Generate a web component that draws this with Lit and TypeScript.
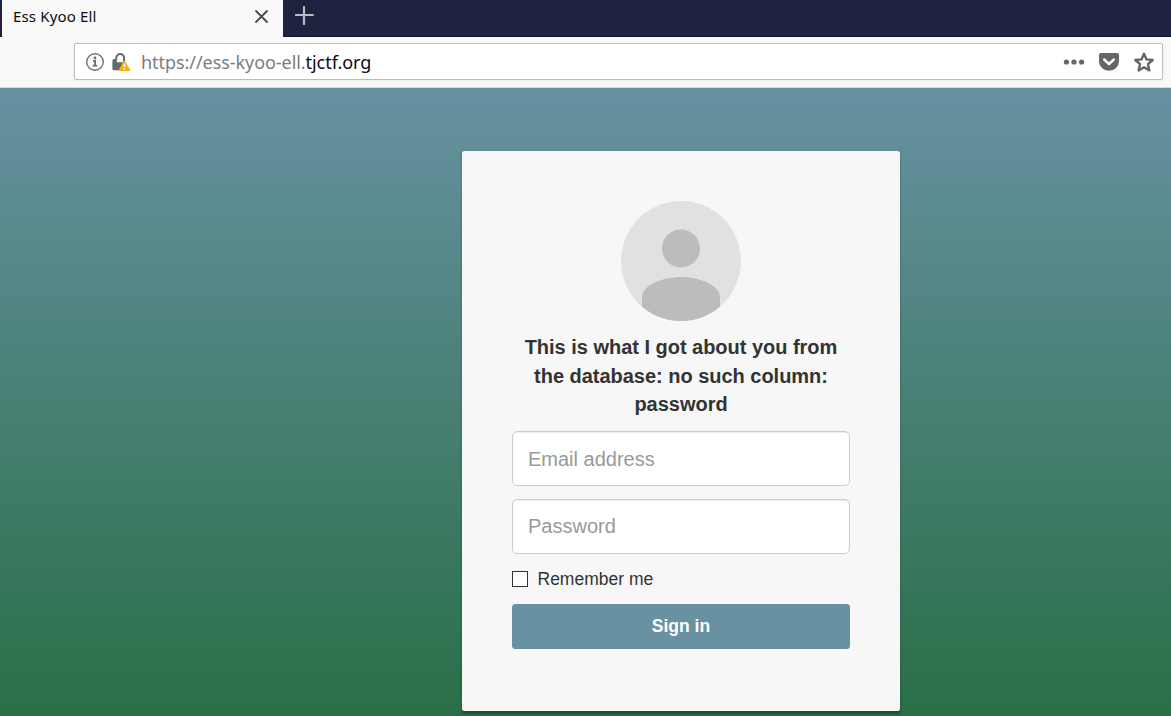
import { LitElement, html, css } from "lit";
import { customElement } from "lit/decorators.js";

@customElement("browser-chrome")
class BrowserChrome extends LitElement {
  static styles = css`
    :host { display: block; font-family: "Noto Sans", sans-serif; }
    .tabs { display: flex; height: 37px; background: #20233f; box-shadow: inset 0 -1px #141630; padding-left: 2px; box-sizing: border-box; }
    .tab { display: flex; align-items: flex-start; justify-content: space-between; width: 281px; box-sizing: border-box; padding: 5px 14px 0 11px; background: #f9f9fa; color: #0c0c0d; font-size: 15px; line-height: 22px; }
    .title { white-space: nowrap; letter-spacing: .15px; }
    .close { margin-top: 4px; }
    .plus { margin: 6px 0 0 11.5px; }
    svg { display: block; flex: none; }
    .toolbar { display: flex; height: 51px; box-sizing: border-box; background: #f9f9fa; border-bottom: 1px solid #dcdcdd; padding: 6px 8px 7px 74px; }
    .field { display: flex; align-items: center; flex: 1; box-sizing: border-box; height: 37px; border: 1px solid #bcbcbd; border-radius: 2px; background: #fff; box-shadow: 0 1px 4px rgba(0,0,0,.06); padding: 0 8px 0 10px; }
    .lock { margin-left: 7px; }
    .url { flex: 1; margin-left: 10px; font-size: 18px; letter-spacing: -.06px; line-height: 26px; padding-top: 1px; color: #7c7c7c; white-space: nowrap; }
    .host { color: #0c0c0d; }
    .pocket { margin: 0 15px 0 14px; }
  `;
  render() {
    return html`
      <div class="tabs">
        <div class="tab">
          <span class="title">Ess Kyoo Ell</span>
          <svg class="close" width="15" height="15" viewBox="0 0 15 15"><path d="M2 2L13 13M13 2L2 13" stroke="#4a4a4f" stroke-width="1.8" stroke-linecap="round"/></svg>
        </div>
        <svg class="plus" width="19" height="19" viewBox="0 0 19 19"><path d="M9 1v17M.9 9h17" stroke="#b9bac5" stroke-width="2.2" stroke-linecap="round"/></svg>
      </div>
      <div class="toolbar">
        <div class="field">
          <svg width="20" height="20" viewBox="0 0 20 20"><circle cx="10" cy="10" r="8.3" fill="none" stroke="#737373" stroke-width="1.4"/><circle cx="10" cy="6" r="1.4" fill="#666"/><path d="M8 8.8h2.1v5M7.8 13.7h4.4" fill="none" stroke="#666" stroke-width="1.7"/></svg>
          <svg class="lock" width="19" height="20" viewBox="0 0 19 20"><path d="M4.300 7.500V6a3.900 3.900 0 0 1 7.800 0v4" fill="none" stroke="#696969" stroke-width="2"/><path d="M2 7h2.800v3.200h6.400v8H1.700Q.4 18.200.4 16.900V8.700Q.4 7 2 7z" fill="#696969"/><path d="M12.400 9L18 18.400H6.800z" fill="#ffb000" stroke="#ffb000" stroke-width="1" stroke-linejoin="round"/><path d="M12.400 11.700v3.300M12.400 16v1.500" stroke="#fff" stroke-width="1.500"/></svg>
          <div class="url">https://ess-kyoo-ell.<span class="host">tjctf.org</span></div>
          <svg width="22" height="20" viewBox="0 0 22 20"><g fill="#666"><circle cx="3.4" cy="10" r="2.6"/><circle cx="11" cy="10" r="2.6"/><circle cx="18.6" cy="10" r="2.6"/></g></svg>
          <svg class="pocket" width="20" height="20" viewBox="0 0 20 20"><path d="M2 1h16q2 0 2 2v6.2a10 9.6 0 0 1-20 0V3q0-2 2-2z" fill="#666"/><path d="M5.2 7.5L10 12l4.8-4.5" fill="none" stroke="#fff" stroke-width="2.4" stroke-linecap="round" stroke-linejoin="round"/></svg>
          <svg width="20" height="20" viewBox="0 0 20 20"><path d="M10 1.8l2.5 5.600 6.200.6-4.700 4.200 1.400 6.200-5.400-3.200-5.400 3.200L6 12.200 1.300 8l6.200-.6z" fill="none" stroke="#666" stroke-width="2.400" stroke-linejoin="round"/></svg>
        </div>
      </div>`;
  }
}

@customElement("sign-in-card")
class SignInCard extends LitElement {
  static styles = css`
    :host { display: block; box-sizing: border-box; width: 438px; height: 560px; padding: 50px; background: #f7f7f7; border-radius: 2.5px; box-shadow: 0 2.5px 2.5px rgba(0,0,0,.3); color: #333; }
    .avatar { display: block; margin: 0 auto 12px; }
    .message { margin: 0 0 12px; text-align: center; font-size: 20px; font-weight: 700; line-height: 28.5px; letter-spacing: -.02px; }
    .input { display: block; box-sizing: border-box; width: 100%; height: 55px; margin: 0 0 13px; padding: 0 15px; border: 1px solid #ccc; border-radius: 5px; background: #fff; box-shadow: inset 0 1px 1px rgba(0,0,0,.075); font: 20px "Liberation Sans", sans-serif; }
    .email { padding-top: 2px; }
    .input::placeholder { color: #999; opacity: 1; }
    .remember { display: flex; align-items: center; height: 25px; margin-bottom: 12px; font-size: 17.5px; }
    .check { appearance: none; width: 16px; height: 16px; margin: 0 9.5px 0 0; border: 1px solid #333; background: #fff; }
    .button { display: block; width: 100%; height: 45px; padding: 0; border: 0; border-radius: 3.5px; background: #6891a2; color: #fff; font: 700 17.5px "Liberation Sans", sans-serif; }
  `;
  render() {
    return html`
      <svg class="avatar" width="120" height="120" viewBox="0 0 120 120">
        <defs><clipPath id="disc"><circle cx="60" cy="60" r="60"/></clipPath></defs>
        <g clip-path="url(#disc)"><path d="M0 0h120v120H0z" fill="#e1e1e1"/><circle cx="60" cy="47.5" r="19" fill="#bcbcbc"/><path d="M21 120V96C21 85 40 76 60 76s39 9 39 20v24z" fill="#bcbcbc"/></g>
      </svg>
      <p class="message">This is what I got about you from the database: no such column: password</p>
      <input class="input email" type="email" placeholder="Email address">
      <input class="input" type="password" placeholder="Password">
      <label class="remember"><input class="check" type="checkbox">Remember me</label>
      <button class="button">Sign in</button>`;
  }
}

@customElement("app-root")
class AppRoot extends LitElement {
  static styles = css`
    :host { display: flex; flex-direction: column; width: 1171px; height: 716px; overflow: hidden; font-family: "Liberation Sans", Arial, sans-serif; }
    .page { flex: 1; padding: 63px 0 0 462px; background: linear-gradient(#6891a2, #286f47); }
  `;
  render() {
    return html`<browser-chrome></browser-chrome><main class="page"><sign-in-card></sign-in-card></main>`;
  }
}
